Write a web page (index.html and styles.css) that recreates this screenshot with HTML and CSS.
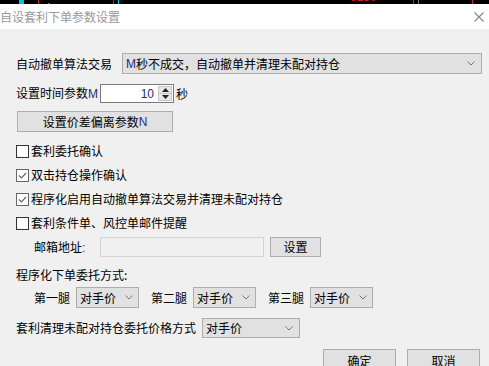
FILE: index.html
```html
<!doctype html>
<html lang="zh-CN">
<head>
	<meta charset="UTF-8">
	<title>自设套利下单参数设置</title>
	<link rel="stylesheet" href="styles.css">
</head>
<body>
	<div class="strip">
		<i class="mk cy" style="left:19px;width:5px"></i>
		<i class="mk rd" style="left:38px"></i>
		<i class="mk cy low" style="left:48px"></i>
		<i class="mk rd" style="left:113px"></i>
		<i class="mk cy" style="left:118px"></i>
		<span class="quote">9150</span>
		<i class="mk rd" style="left:413px"></i>
		<i class="mk gy" style="left:418px"></i>
		<i class="mk rd" style="left:472px"></i>
	</div>
	<div class="titlebar">
		<span class="title">自设套利下单参数设置</span>
		<svg class="close" width="10" height="10" viewBox="0 0 10 10"><path d="M0.5 0.5L9.5 9.5M9.5 0.5L0.5 9.5" stroke="#888" stroke-width="1.1" fill="none"/></svg>
	</div>
	<div class="content">
		<div class="row r-algo">
			<span class="lbl w-algo">自动撤单算法交易</span>
			<div class="combo w-360"><span class="lat">M</span>秒不成交，自动撤单并清理未配对持仓<svg class="chev" width="8" height="5" viewBox="0 0 8 5"><path d="M0.5 0.5L4 4L7.5 0.5" stroke="#777" fill="none"/></svg></div>
		</div>
		<div class="row r-time">
			<span class="lbl w-time">设置时间参数<span class="lat">M</span></span>
			<div class="spin">
				<span class="num">10</span>
				<div class="arrows">
					<span class="arr"><svg width="7" height="4" viewBox="0 0 7 4"><path d="M3.5 0L7 4H0Z" fill="#222"/></svg></span>
					<span class="arr"><svg width="7" height="4" viewBox="0 0 7 4"><path d="M0 0H7L3.5 4Z" fill="#222"/></svg></span>
				</div>
			</div>
			<span class="unit">秒</span>
		</div>
		<div class="row r-btn">
			<div class="btn w-156">设置价差偏离参数<span class="lat">N</span></div>
		</div>
		<div class="checks">
			<div class="chk"><span class="box"></span>套利委托确认</div>
			<div class="chk"><span class="box on"><svg width="11" height="11" viewBox="0 0 11 11"><path d="M2 5.5L4.5 8L9 3" stroke="#666" stroke-width="1.2" fill="none"/></svg></span>双击持仓操作确认</div>
			<div class="chk"><span class="box on"><svg width="11" height="11" viewBox="0 0 11 11"><path d="M2 5.5L4.5 8L9 3" stroke="#666" stroke-width="1.2" fill="none"/></svg></span>程序化启用自动撤单算法交易并清理未配对持仓</div>
			<div class="chk"><span class="box"></span>套利条件单、风控单邮件提醒</div>
		</div>
		<div class="row r-mail">
			<span class="lbl w-mail">邮箱地址<span class="lat">:</span></span>
			<div class="field"></div>
			<div class="btn w-51">设置</div>
		</div>
		<div class="row r-way">
			<span class="lbl">程序化下单委托方式:</span>
		</div>
		<div class="row r-legs">
			<span class="lbl">第一腿</span>
			<div class="combo w-63">对手价<svg class="chev" width="8" height="5" viewBox="0 0 8 5"><path d="M0.5 0.5L4 4L7.5 0.5" stroke="#777" fill="none"/></svg></div>
			<span class="lbl">第二腿</span>
			<div class="combo w-63">对手价<svg class="chev" width="8" height="5" viewBox="0 0 8 5"><path d="M0.5 0.5L4 4L7.5 0.5" stroke="#777" fill="none"/></svg></div>
			<span class="lbl">第三腿</span>
			<div class="combo w-63">对手价<svg class="chev" width="8" height="5" viewBox="0 0 8 5"><path d="M0.5 0.5L4 4L7.5 0.5" stroke="#777" fill="none"/></svg></div>
		</div>
		<div class="row r-price">
			<span class="lbl w-price">套利清理未配对持仓委托价格方式</span>
			<div class="combo w-98">对手价<svg class="chev" width="8" height="5" viewBox="0 0 8 5"><path d="M0.5 0.5L4 4L7.5 0.5" stroke="#777" fill="none"/></svg></div>
		</div>
		<div class="row r-foot">
			<div class="btn w-73">确定</div>
			<div class="btn w-73">取消</div>
		</div>
	</div>
</body>
</html>
```

FILE: styles.css
```css
html{
	height: 100%;
}
body{
	margin: 0;
	width: 489px;
	height: 366px;
	overflow: hidden;
	background: #f0f0f0;
	color: #000;
	font: 12px/1 "Noto Sans CJK SC", "Liberation Sans", sans-serif;
}
.strip{
	height: 4px;
	background: #000;
	position: relative;
	overflow: hidden;
}
.mk{
	position: absolute;
	top: 0;
	width: 1px;
	height: 4px;
}
.cy{ background: #00c8d8; }
.rd{ background: #d02020; }
.gy{ background: #777; }
.low{ top: 3px; height: 1px; }
.quote{
	position: absolute;
	left: 350px;
	top: -9px;
	color: #d02020;
	font: 12px/12px "Liberation Sans", sans-serif;
}
.titlebar{
	height: 25px;
	background: #fff;
	display: flex;
	align-items: center;
	justify-content: space-between;
	padding-right: 5px;
}
.title{
	color: #999;
	font-size: 12px;
}
.content{
	padding: 24px 0 0 16px;
}
.row{
	display: flex;
	align-items: center;
}
.lat{
	font-family: "Liberation Sans", sans-serif;
	color: #1d2c7a;
}
.lbl{
	white-space: nowrap;
	flex: none;
}
.w-algo{ width: 106px; }
.w-time{ width: 84px; }
.w-mail{ width: 66px; }
.w-price{ width: 186px; }
.combo{
	box-sizing: border-box;
	height: 21px;
	background: #e1e1e1;
	border: 1px solid #adadad;
	display: flex;
	align-items: center;
	padding: 0 6px 0 3px;
	white-space: nowrap;
	flex: none;
}
.combo .chev{
	margin-left: auto;
}
.combo .lat{
	color: #1d2c7a;
}
.w-360{ width: 360px; }
.w-63{ width: 63px; padding-right: 5px; }
.w-98{ width: 98px; height: 20px; padding-right: 6px; }
.r-algo{ height: 21px; }
.r-time{
	height: 19px;
	margin-top: 10px;
}
.spin{
	box-sizing: border-box;
	width: 74px;
	height: 19px;
	background: #fff;
	border: 1px solid #7a7a7a;
	display: flex;
	align-items: center;
}
.num{
	flex: 1;
	text-align: right;
	padding-right: 4px;
	font-family: "Liberation Sans", sans-serif;
	color: #1d2c7a;
}
.arrows{
	width: 14px;
	height: 15px;
	margin-right: 1px;
	display: flex;
	flex-direction: column;
	border: 1px solid #c8c8c8;
	box-sizing: border-box;
	background: #e6e6e6;
}
.arr{
	flex: 1;
	display: flex;
	align-items: center;
	justify-content: center;
}
.arr + .arr{
	border-top: 1px solid #c8c8c8;
}
.unit{
	margin-left: 2px;
}
.btn{
	box-sizing: border-box;
	height: 21px;
	background: #e1e1e1;
	border: 1px solid #adadad;
	display: flex;
	align-items: center;
	justify-content: center;
	flex: none;
}
.r-btn{
	margin-top: 8px;
	padding-left: 1px;
}
.w-156{ width: 156px; }
.w-51{ width: 51px; height: 20px; margin-left: 6px; }
.w-73{ width: 73px; height: 23px; }
.checks{
	margin-top: 7px;
}
.chk{
	height: 24px;
	display: flex;
	align-items: center;
}
.box{
	box-sizing: border-box;
	width: 13px;
	height: 13px;
	border: 1px solid #333;
	background: #fff;
	margin-right: 2px;
	display: flex;
	align-items: center;
	justify-content: center;
}
.box.on{
	border-color: #666;
}
.r-mail{
	margin-top: 2px;
	height: 20px;
	padding-left: 18px;
}
.field{
	box-sizing: border-box;
	width: 164px;
	height: 20px;
	border: 1px solid #d4d4d4;
	background: #f0f0f0;
}
.r-way{
	margin-top: 8px;
	height: 20px;
}
.r-legs{
	margin-top: 2px;
	height: 21px;
	padding-left: 18px;
}
.r-legs .lbl{
	width: 36px;
	margin-right: 6px;
}
.r-legs .combo{
	margin-right: 12px;
}
.r-price{
	margin-top: 10px;
	height: 20px;
}
.r-foot{
	margin-top: 11px;
	justify-content: flex-end;
	gap: 11px;
	padding-right: 9px;
}
```
